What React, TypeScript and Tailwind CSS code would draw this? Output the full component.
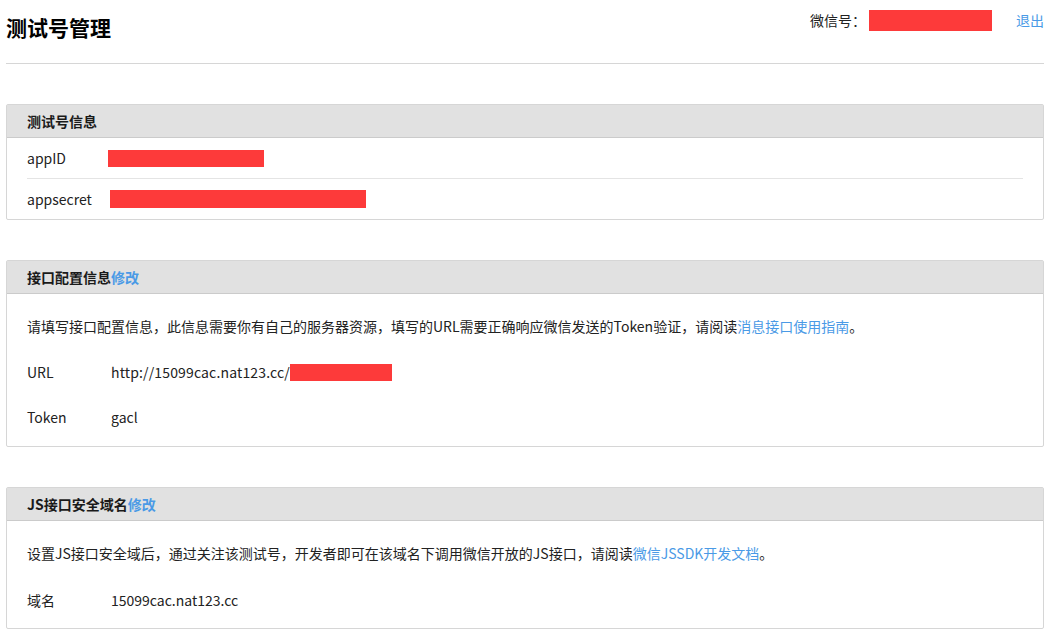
import React from 'react';

const font = { fontFamily: '"Noto Sans CJK SC", "Liberation Sans", sans-serif' };

const Redact: React.FC<{ className: string }> = ({ className }) => (
  <span className={`inline-block bg-[#fd3a3a] ${className}`} />
);

const Panel: React.FC<{ title: string; edit?: boolean; children: React.ReactNode; className?: string }> = ({
  title,
  edit,
  children,
  className = '',
}) => (
  <div className={`border border-[#d6d6d6] rounded-[2px] bg-white ${className}`}>
    <div className="h-[33px] bg-[#e1e1e1] border-b border-[#cbcbcb] flex items-center pl-[20px] text-[14px] font-bold text-[#1a1a1a]">
      {title}
      {edit && <a className="text-[#4a9ae6] cursor-pointer">修改</a>}
    </div>
    {children}
  </div>
);

const App: React.FC = () => {
  return (
    <div className="min-h-[632px] bg-white pl-[6px] pr-[3px] text-[14px] text-[#222]" style={font}>
      {/* Top bar */}
      <div className="h-[64px] flex items-start justify-between border-b border-[#d6d6d6]">
        <h1 className="mt-[12px] text-[21px] leading-[30px] font-bold text-black">测试号管理</h1>
        <div className="flex items-center mt-[10px] h-[21px]">
          <span className="text-[#222]">微信号：</span>
          <Redact className="w-[123px] h-[21px] ml-[3px]" />
          <a className="ml-[24px] text-[#4a9ae6] cursor-pointer">退出</a>
        </div>
      </div>

      {/* 测试号信息 */}
      <Panel title="测试号信息" className="mt-[40px]">
        <div className="px-[20px]">
          <div className="h-[41px] flex items-center border-b border-[#e4e4e4]">
            <span className="w-[81px]">appID</span>
            <Redact className="w-[156px] h-[17px]" />
          </div>
          <div className="h-[40px] flex items-center">
            <span className="w-[83px]">appsecret</span>
            <Redact className="w-[256px] h-[18px]" />
          </div>
        </div>
      </Panel>

      {/* 接口配置信息 */}
      <Panel title="接口配置信息" edit className="mt-[40px]">
        <div className="px-[20px] pt-[22px] pb-[19px] leading-[20px]">
          <p>
            请填写接口配置信息，此信息需要你有自己的服务器资源，填写的URL需要正确响应微信发送的Token验证，请阅读
            <a className="text-[#4a9ae6] cursor-pointer">消息接口使用指南</a>。
          </p>
          <div className="flex items-center mt-[26px] h-[20px]">
            <span className="w-[84px]">URL</span>
            <span className="tracking-[0.15px]">http://15099cac.nat123.cc/</span>
            <Redact className="w-[102px] h-[17px]" />
          </div>
          <div className="flex items-center mt-[25px] h-[20px]">
            <span className="w-[84px]">Token</span>
            <span>gacl</span>
          </div>
        </div>
      </Panel>

      {/* JS接口安全域名 */}
      <Panel title="JS接口安全域名" edit className="mt-[40px]">
        <div className="px-[20px] pt-[22px] pb-[18px] leading-[20px]">
          <p>
            设置JS接口安全域后，通过关注该测试号，开发者即可在该域名下调用微信开放的JS接口，请阅读
            <a className="text-[#4a9ae6] cursor-pointer">微信JSSDK开发文档</a>。
          </p>
          <div className="flex items-center mt-[27px] h-[20px]">
            <span className="w-[84px]">域名</span>
            <span>15099cac.nat123.cc</span>
          </div>
        </div>
      </Panel>
    </div>
  );
};

export default App;
